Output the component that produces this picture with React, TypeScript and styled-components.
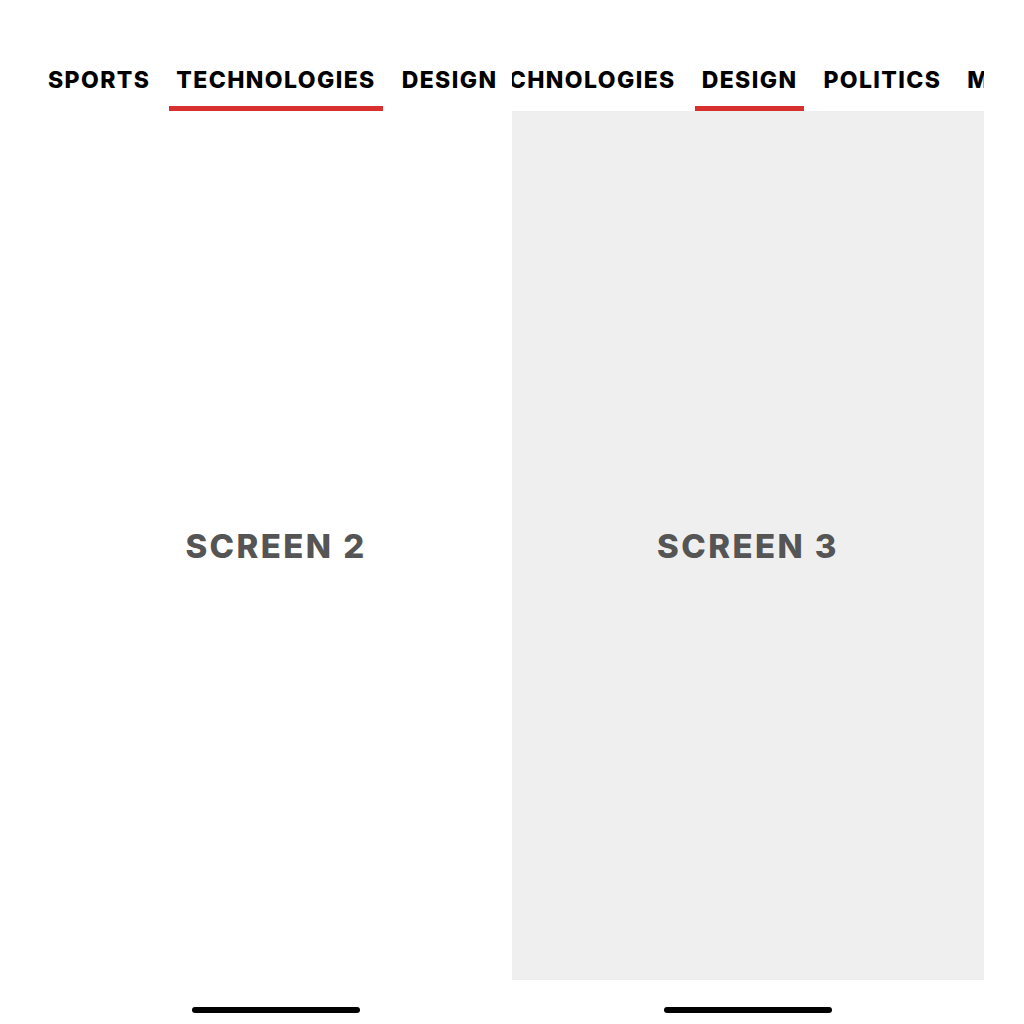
import styled, { createGlobalStyle } from "styled-components";

const GlobalStyle = createGlobalStyle`
  html, body {
    margin: 0;
    padding: 0;
    background: #ffffff;
  }
  body {
    font-family: Inter, "Noto Sans", "Liberation Sans", sans-serif;
  }
`;

const Stage = styled.div`
  display: flex;
  width: 1024px;
  height: 1024px;
  padding-left: 40px; /* first screen starts a bit in */
  box-sizing: border-box;
  overflow: hidden;
`;

const Screen = styled.div`
  width: 472px;
  height: 1024px;
  flex: none;
  display: flex;
  flex-direction: column;
  overflow: hidden;
  background: #ffffff;
  padding-top: 66px;
  box-sizing: border-box;
`;

const TabStrip = styled.div`
  overflow: hidden;
  flex: none;
`;

const TabRow = styled.div<{ $offset: number }>`
  display: flex;
  gap: 12px;
  margin-left: ${(p) => p.$offset}px; // scroll position of the strip
  width: max-content;
`;

const Tab = styled.div`
  display: flex;
  flex-direction: column;
  align-items: stretch;
`;

const TabLabel = styled.span`
  font-size: 23px;
  line-height: 28px;
  font-weight: 800;
  color: #000000;
  letter-spacing: 1.4px;
  padding: 0 7px 12px;
  white-space: nowrap;
`;

const Underline = styled.div<{ $active?: boolean }>`
  height: 5px;
  background: ${(p) => (p.$active ? "#d8302f" : "transparent")};
`;

const Content = styled.div<{ $shade?: boolean }>`
  height: 869px;
  flex: none;
  display: flex;
  align-items: center;
  justify-content: center;
  background: ${(p) => (p.$shade ? "#efefef" : "#ffffff")};
`;

const ScreenTitle = styled.h2`
  margin: 0;
  font-size: 33px;
  font-weight: 800;
  color: #555555;
  letter-spacing: 2.4px;
`;

const BottomBar = styled.div`
  flex: 1;
  display: flex;
  justify-content: center;
  padding-top: 27px;
`;

const HomeIndicator = styled.div`
  width: 168px;
  height: 6px;
  border-radius: 3px;
  background: #000000;
`;

const tabs = ["SPORTS", "TECHNOLOGIES", "DESIGN", "POLITICS", "MUSIC"];

const PhoneScreen: React.FC<{ active: string; offset: number; title: string; shade?: boolean }> = ({
  active,
  offset,
  title,
  shade,
}) => (
  <Screen>
    <TabStrip>
      <TabRow $offset={offset}>
        {tabs.map((t) => (
          <Tab key={t}>
            <TabLabel>{t}</TabLabel>
            <Underline $active={t === active} />
          </Tab>
        ))}
      </TabRow>
    </TabStrip>
    <Content $shade={shade}>
      <ScreenTitle>{title}</ScreenTitle>
    </Content>
    <BottomBar>
      <HomeIndicator />
    </BottomBar>
  </Screen>
);

export default function App() {
  return (
    <>
      <GlobalStyle />
      <Stage>
        <PhoneScreen active="TECHNOLOGIES" offset={1} title="SCREEN 2" />
        <PhoneScreen active="DESIGN" offset={-171} title="SCREEN 3" shade />
      </Stage>
    </>
  );
}
